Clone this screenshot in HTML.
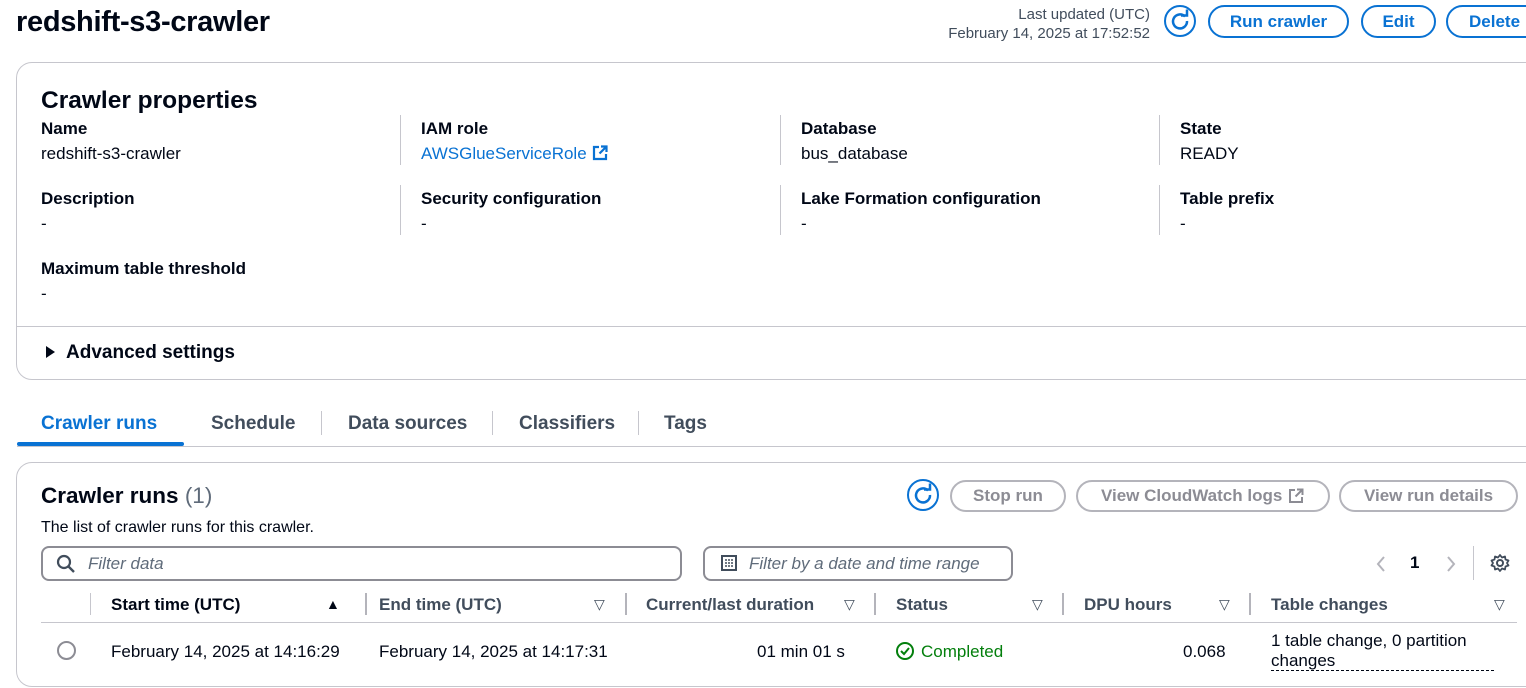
<!DOCTYPE html>
<html><head><meta charset="utf-8"><style>
*{margin:0;padding:0;box-sizing:border-box}
body{width:1526px;height:688px;overflow:hidden;background:#fff;font-family:"Liberation Sans",sans-serif;color:#000716;position:relative}
.t{position:absolute;white-space:nowrap;line-height:20px;font-size:17px}
.b{font-weight:bold}
.lbl{font-weight:bold;font-size:17px}
.vd{position:absolute;width:1px;background:#c6c6cd}
.btn{position:absolute;border:2px solid #0972d3;border-radius:20px;color:#0972d3;font-weight:bold;font-size:17px;display:flex;align-items:center;justify-content:center;white-space:nowrap}
.gbtn{position:absolute;border:2px solid #b4b4bb;border-radius:20px;color:#8c8c94;font-weight:bold;font-size:17px;display:flex;align-items:center;justify-content:center;white-space:nowrap}
.card{position:absolute;border:1px solid #c6c6cd;border-radius:16px;background:#fff}
.sep{position:absolute;width:2px;background:#b4b4bb;height:22px;top:593px}
.sort{position:absolute;top:596px;font-size:14px;color:#414d5c}
</style></head><body>
<div class="t b" style="left:16px;top:5px;font-size:29px;line-height:34px;letter-spacing:-0.3px">redshift-s3-crawler</div>
<div class="t" style="right:376px;top:5px;font-size:15px;color:#414d5c">Last updated (UTC)</div>
<div class="t" style="right:376px;top:24px;font-size:15px;color:#414d5c">February 14, 2025 at 17:52:52</div>
<svg style="position:absolute;left:1163px;top:4px" width="34" height="34" viewBox="0 0 34 34"><circle cx="17" cy="17" r="15" fill="none" stroke="#0972d3" stroke-width="2"/><path d="M22 12.5A7 7 0 1 0 24 17" fill="none" stroke="#0972d3" stroke-width="2.5"/><path d="M18 11.5h6v-6" fill="none" stroke="#0972d3" stroke-width="2.5"/></svg>
<div class="btn" style="left:1208px;top:5px;width:141px;height:33px">Run crawler</div>
<div class="btn" style="left:1361px;top:5px;width:75px;height:33px">Edit</div>
<div class="btn" style="left:1446px;top:5px;width:100px;height:33px;justify-content:flex-start;padding-left:21px">Delete</div>

<div class="card" style="left:16px;top:62px;width:1530px;height:318px"></div>
<div class="t b" style="left:41px;top:87px;font-size:24.5px;line-height:28px">Crawler properties</div>
<div class="t lbl" style="left:41px;top:119px">Name</div>
<div class="t" style="left:41px;top:144px">redshift-s3-crawler</div>
<div class="vd" style="left:400px;top:115px;height:50px"></div>
<div class="t lbl" style="left:421px;top:119px">IAM role</div>
<div class="t" style="left:421px;top:144px;color:#0972d3">AWSGlueServiceRole <svg width="18" height="18" viewBox="0 0 18 18" style="vertical-align:-3px"><path d="M8 3H3v12h12v-5" fill="none" stroke="#0972d3" stroke-width="2.2"/><path d="M10 2.5h5.5V8M15.5 2.5L8.5 9.5" fill="none" stroke="#0972d3" stroke-width="2.2"/></svg></div>
<div class="vd" style="left:780px;top:115px;height:50px"></div>
<div class="t lbl" style="left:801px;top:119px">Database</div>
<div class="t" style="left:801px;top:144px">bus_database</div>
<div class="vd" style="left:1159px;top:115px;height:50px"></div>
<div class="t lbl" style="left:1180px;top:119px">State</div>
<div class="t" style="left:1180px;top:144px">READY</div>

<div class="t lbl" style="left:41px;top:189px">Description</div>
<div class="t" style="left:41px;top:214px">-</div>
<div class="vd" style="left:400px;top:185px;height:50px"></div>
<div class="t lbl" style="left:421px;top:189px">Security configuration</div>
<div class="t" style="left:421px;top:214px">-</div>
<div class="vd" style="left:780px;top:185px;height:50px"></div>
<div class="t lbl" style="left:801px;top:189px">Lake Formation configuration</div>
<div class="t" style="left:801px;top:214px">-</div>
<div class="vd" style="left:1159px;top:185px;height:50px"></div>
<div class="t lbl" style="left:1180px;top:189px">Table prefix</div>
<div class="t" style="left:1180px;top:214px">-</div>

<div class="t lbl" style="left:41px;top:259px">Maximum table threshold</div>
<div class="t" style="left:41px;top:284px">-</div>
<div style="position:absolute;left:17px;top:326px;width:1509px;height:1px;background:#c6c6cd"></div>
<svg style="position:absolute;left:46px;top:346px" width="10" height="12"><path d="M0 0L9 6L0 12Z" fill="#000716"/></svg>
<div class="t b" style="left:66px;top:343px;font-size:19px">Advanced settings</div>

<div class="t b" style="left:41px;top:414px;font-size:19px;color:#0972d3">Crawler runs</div>
<div class="vd" style="left:321px;top:411px;height:24px"></div>
<div class="t b" style="left:211px;top:414px;font-size:19px;color:#414d5c">Schedule</div>
<div class="vd" style="left:492px;top:411px;height:24px"></div>
<div class="t b" style="left:348px;top:414px;font-size:19px;color:#414d5c">Data sources</div>
<div class="vd" style="left:638px;top:411px;height:24px"></div>
<div class="t b" style="left:519px;top:414px;font-size:19px;color:#414d5c">Classifiers</div>
<div class="t b" style="left:664px;top:414px;font-size:19px;color:#414d5c">Tags</div>
<div style="position:absolute;left:17px;top:446px;width:1509px;height:1px;background:#c6c6cd"></div>
<div style="position:absolute;left:17px;top:442px;width:167px;height:4px;background:#0972d3;border-radius:2px"></div>

<div class="card" style="left:16px;top:462px;width:1530px;height:225px"></div>
<div class="t b" style="left:41px;top:483px;font-size:22.5px;line-height:26px">Crawler runs <span style="font-weight:normal;color:#5f6b7a">(1)</span></div>
<div class="t" style="left:41px;top:518px;font-size:16px">The list of crawler runs for this crawler.</div>
<svg style="position:absolute;left:906px;top:478px" width="34" height="34" viewBox="0 0 34 34"><circle cx="17" cy="17" r="15" fill="none" stroke="#0972d3" stroke-width="2"/><path d="M22 12.5A7 7 0 1 0 24 17" fill="none" stroke="#0972d3" stroke-width="2.5"/><path d="M18 11.5h6v-6" fill="none" stroke="#0972d3" stroke-width="2.5"/></svg>
<div class="gbtn" style="left:950px;top:480px;width:116px;height:32px">Stop run</div>
<div class="gbtn" style="left:1076px;top:480px;width:254px;height:32px">View CloudWatch logs&nbsp;<svg width="18" height="18" viewBox="0 0 18 18"><path d="M8 3H3v12h12v-5" fill="none" stroke="#8c8c94" stroke-width="2"/><path d="M10 2.5h5.5V8M15.5 2.5L8.5 9.5" fill="none" stroke="#8c8c94" stroke-width="2"/></svg></div>
<div class="gbtn" style="left:1339px;top:480px;width:179px;height:32px">View run details</div>

<div style="position:absolute;left:41px;top:546px;width:641px;height:35px;border:2px solid #8c8c94;border-radius:8px"></div>
<svg style="position:absolute;left:56px;top:554px" width="20" height="20"><circle cx="8" cy="8" r="6" fill="none" stroke="#414d5c" stroke-width="2.2"/><path d="M12.5 12.5L18 18" stroke="#414d5c" stroke-width="2.4"/></svg>
<div class="t" style="left:88px;top:554px;font-style:italic;color:#5f6b7a">Filter data</div>
<div style="position:absolute;left:703px;top:546px;width:310px;height:35px;border:2px solid #8c8c94;border-radius:8px"></div>
<svg style="position:absolute;left:721px;top:555px" width="16" height="16"><rect x="1" y="1" width="14" height="14" fill="none" stroke="#414d5c" stroke-width="2"/><path d="M4 5h2M7 5h2M10 5h2M4 8h2M7 8h2M10 8h2M4 11h2M7 11h2M10 11h2" stroke="#414d5c" stroke-width="1.6"/></svg>
<div class="t" style="left:749px;top:554px;font-style:italic;color:#5f6b7a">Filter by a date and time range</div>
<svg style="position:absolute;left:1375px;top:555px" width="12" height="18"><path d="M9 2L3 9l6 7" fill="none" stroke="#b4b4bb" stroke-width="2"/></svg>
<div class="t b" style="left:1410px;top:553px">1</div>
<svg style="position:absolute;left:1445px;top:555px" width="12" height="18"><path d="M3 2l6 7-6 7" fill="none" stroke="#b4b4bb" stroke-width="2"/></svg>
<div class="vd" style="left:1473px;top:546px;height:34px"></div>
<svg style="position:absolute;left:1490px;top:553px" width="20" height="20" viewBox="0 0 20 20"><circle cx="10" cy="10" r="3" fill="none" stroke="#414d5c" stroke-width="2"/><path d="M10 2l2 2.5 3-1 .5 3 3 1-1.5 2.5 1.5 2.5-3 1-.5 3-3-1-2 2.5-2-2.5-3 1-.5-3-3-1L3 10 1.5 7.5l3-1 .5-3 3 1z" fill="none" stroke="#414d5c" stroke-width="1.8" stroke-linejoin="round"/></svg>

<div class="vd" style="left:90px;top:593px;height:22px"></div>
<div class="t b" style="left:111px;top:595px">Start time (UTC)</div>
<div class="sort" style="left:326px;color:#000716">▲</div>
<div class="sep" style="left:365px"></div>
<div class="t b" style="left:379px;top:595px;color:#414d5c">End time (UTC)</div>
<div class="sort" style="left:594px">▽</div>
<div class="sep" style="left:625px"></div>
<div class="t b" style="left:646px;top:595px;color:#414d5c">Current/last duration</div>
<div class="sort" style="left:844px">▽</div>
<div class="sep" style="left:874px"></div>
<div class="t b" style="left:896px;top:595px;color:#414d5c">Status</div>
<div class="sort" style="left:1032px">▽</div>
<div class="sep" style="left:1062px"></div>
<div class="t b" style="left:1084px;top:595px;color:#414d5c">DPU hours</div>
<div class="sort" style="left:1219px">▽</div>
<div class="sep" style="left:1249px"></div>
<div class="t b" style="left:1271px;top:595px;color:#414d5c">Table changes</div>
<div class="sort" style="left:1494px">▽</div>
<div style="position:absolute;left:41px;top:622px;width:1476px;height:1px;background:#c6c6cd"></div>

<div style="position:absolute;left:57px;top:641px;width:19px;height:19px;border:2px solid #8c8c94;border-radius:50%"></div>
<div class="t" style="left:111px;top:642px">February 14, 2025 at 14:16:29</div>
<div class="t" style="left:379px;top:642px">February 14, 2025 at 14:17:31</div>
<div class="t" style="left:757px;top:642px">01 min 01 s</div>
<svg style="position:absolute;left:896px;top:642px" width="18" height="18"><circle cx="9" cy="9" r="8" fill="none" stroke="#037f0c" stroke-width="2"/><path d="M5 9l3 3 5-6" fill="none" stroke="#037f0c" stroke-width="2"/></svg>
<div class="t" style="left:921px;top:642px;color:#037f0c">Completed</div>
<div class="t" style="left:1183px;top:642px">0.068</div>
<div class="t" style="left:1271px;top:631px">1 table change, 0 partition</div>
<div class="t" style="left:1271px;top:651px">changes</div>
<div style="position:absolute;left:1271px;top:670px;width:223px;border-top:1px dashed #000716"></div>
</body></html>
